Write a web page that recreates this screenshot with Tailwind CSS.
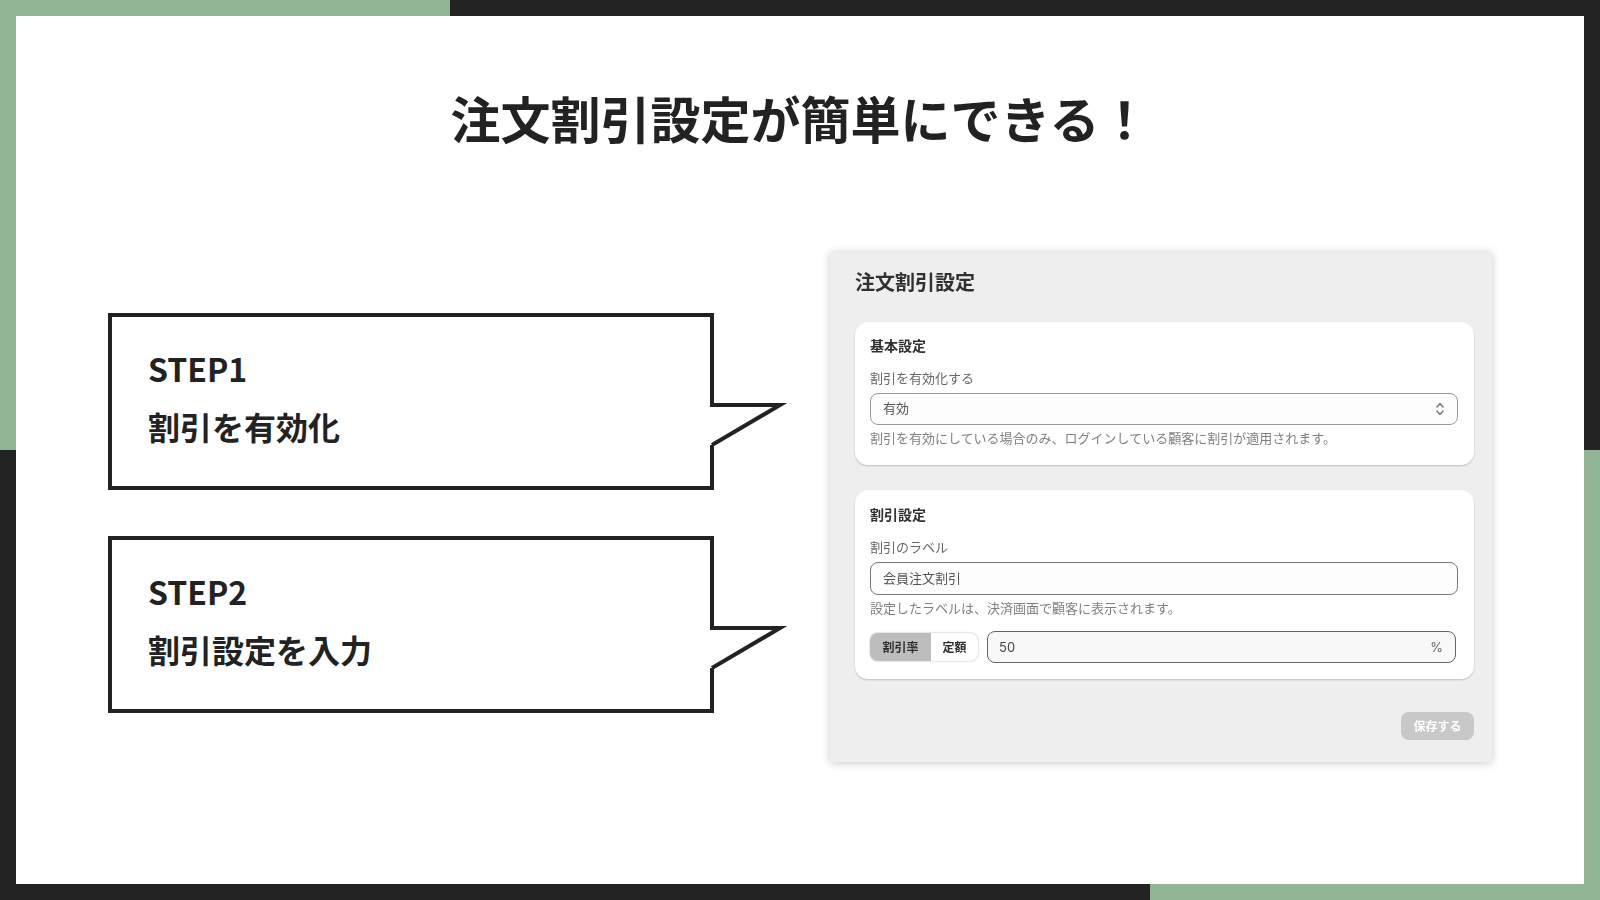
<!DOCTYPE html>
<html lang="ja">

<head>
    <meta charset="UTF-8">
    <meta name="viewport" content="width=device-width, initial-scale=1.0">
    <title>注文割引設定</title>
    <script src="https://cdn.jsdelivr.net/npm/@tailwindcss/browser@4"></script>
</head>

<body class="bg-white font-['Noto_Sans_CJK_JP',sans-serif] text-[#222222]">
    <div class="w-[1600px] h-[900px] flex flex-col overflow-hidden">
        <!-- top frame -->
        <div class="flex h-4 shrink-0">
            <div class="w-[450px] bg-[#91b493]"></div>
            <div class="flex-1 bg-[#222222]"></div>
        </div>

        <div class="flex flex-1 min-h-0">
            <div class="w-4 flex flex-col">
                <div class="h-[434px] bg-[#91b493]"></div>
                <div class="flex-1 bg-[#222222]"></div>
            </div>

            <main class="flex-1 bg-white">
                <h1 class="pt-[71px] text-center text-[50px] leading-[60px] font-bold">注文割引設定が簡単にできる！</h1>

                <div class="mt-[105px] pl-[92px] flex items-start">
                    <!-- steps -->
                    <div class="w-[606px] pt-[61px] flex flex-col gap-[46px] shrink-0">
                        <div class="relative h-[177px] border-4 border-[#222222] pl-9 pt-[22px] text-[32px] leading-[58px] font-bold">
                            <p>STEP1</p>
                            <p>割引を有効化</p>
                            <svg class="absolute left-[598px] top-[83px]" width="81" height="50" viewBox="0 0 81 50">
                                <path d="M0 3 H70 L2 45 H0 Z" fill="#fff" />
                                <path d="M0 5 H70 L2 45" fill="none" stroke="#222222" stroke-width="4" stroke-miterlimit="10" />
                            </svg>
                        </div>
                        <div class="relative h-[177px] border-4 border-[#222222] pl-9 pt-[22px] text-[32px] leading-[58px] font-bold">
                            <p>STEP2</p>
                            <p>割引設定を入力</p>
                            <svg class="absolute left-[598px] top-[83px]" width="81" height="50" viewBox="0 0 81 50">
                                <path d="M0 3 H70 L2 45 H0 Z" fill="#fff" />
                                <path d="M0 5 H70 L2 45" fill="none" stroke="#222222" stroke-width="4" stroke-miterlimit="10" />
                            </svg>
                        </div>
                    </div>

                    <!-- settings screenshot -->
                    <section class="ml-[116px] w-[662px] h-[510px] shrink-0 bg-[#eeeeee] rounded-[2px] shadow-[0_1px_8px_rgba(0,0,0,0.22)] pl-[25px] pr-[18px] pt-[15px] flex flex-col text-[#303030] blur-[0.4px]">
                        <h2 class="text-[20px] leading-[30px] font-semibold">注文割引設定</h2>

                        <div class="mt-[25px] h-[143px] bg-white rounded-[13px] shadow-[0_1px_2px_rgba(0,0,0,0.2)] pl-[15px] pr-4 pt-[13px]">
                            <h3 class="text-[14px] leading-5 font-bold">基本設定</h3>
                            <p class="mt-[13px] text-[13px] leading-5 text-[#666666]">割引を有効化する</p>
                            <div class="mt-[5px] h-8 border border-[#999999] rounded-lg bg-[#fdfdfd] pl-[12px] pr-[11px] pb-[2px] flex items-center justify-between text-[13px] text-[#555555]">
                                <span>有効</span>
                                <svg class="mt-[2px]" width="12" height="16" viewBox="0 0 12 16" fill="none" stroke="#777777" stroke-width="1.4" stroke-linecap="round" stroke-linejoin="round">
                                    <path d="M3 6 L6 2.5 L9 6" />
                                    <path d="M3 10 L6 13.5 L9 10" />
                                </svg>
                            </div>
                            <p class="mt-[3px] text-[13px] leading-5 text-[#808080]">割引を有効にしている場合のみ、ログインしている顧客に割引が適用されます。</p>
                        </div>

                        <div class="mt-[25px] h-[189px] bg-white rounded-[13px] shadow-[0_1px_2px_rgba(0,0,0,0.2)] pl-[15px] pr-4 pt-[14px]">
                            <h3 class="text-[14px] leading-5 font-bold">割引設定</h3>
                            <p class="mt-[13px] text-[13px] leading-5 text-[#666666]">割引のラベル</p>
                            <div class="mt-[5px] h-[33px] border border-[#777777] rounded-lg bg-[#fdfdfd] pl-[12px] pb-[2px] flex items-center text-[13px] text-[#555555]">会員注文割引</div>
                            <p class="mt-[3px] text-[13px] leading-5 text-[#808080]">設定したラベルは、決済画面で顧客に表示されます。</p>
                            <div class="mt-[13px] pr-[2px] flex items-center gap-[9px]">
                                <div class="w-[108px] h-[28px] flex rounded-lg overflow-hidden bg-white shadow-[0_0_2px_rgba(0,0,0,0.35)] text-[12px] font-bold shrink-0">
                                    <div class="w-[61px] bg-[#bdbdbd] flex items-center justify-center">割引率</div>
                                    <div class="flex-1 flex items-center justify-center">定額</div>
                                </div>
                                <div class="flex-1 h-8 border border-[#666666] rounded-lg bg-[#f8f8f8] pl-[11px] pr-3 pt-[1px] flex items-center justify-between font-['Inter','Noto_Sans_CJK_JP',sans-serif] text-[13px] text-[#444444]">
                                    <span>50</span>
                                    <span class="text-[#666666]">%</span>
                                </div>
                            </div>
                        </div>

                        <button class="mt-[33px] self-end w-[73px] h-7 rounded-lg bg-[#c8c8c8] text-white text-[12px] font-bold">保存する</button>
                    </section>
                </div>
            </main>

            <div class="w-4 flex flex-col">
                <div class="h-[434px] bg-[#222222]"></div>
                <div class="flex-1 bg-[#91b493]"></div>
            </div>
        </div>

        <!-- bottom frame -->
        <div class="flex h-4 shrink-0">
            <div class="w-[1150px] bg-[#222222]"></div>
            <div class="flex-1 bg-[#91b493]"></div>
        </div>
    </div>
</body>

</html>
